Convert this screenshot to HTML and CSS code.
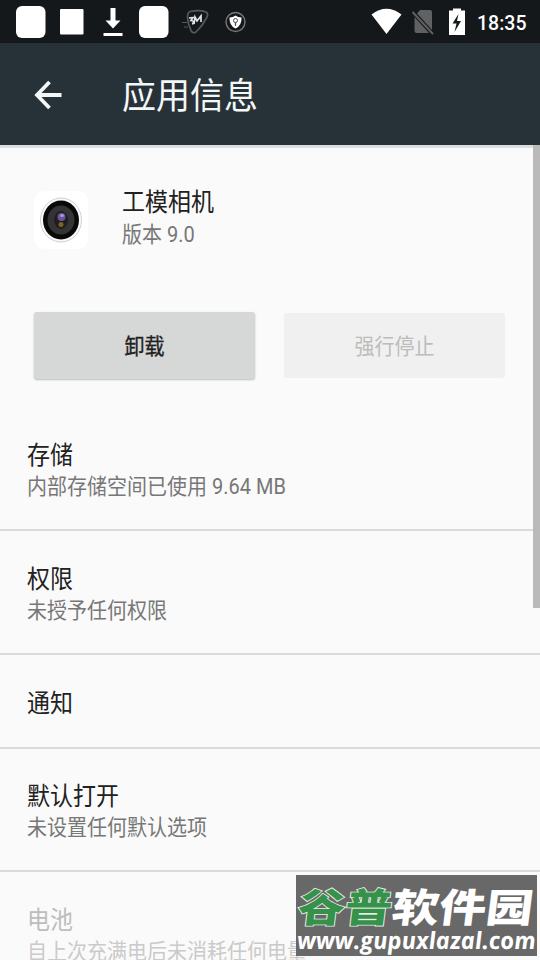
FILE: index.html
```html
<!DOCTYPE html>
<html lang="zh-CN">
<head>
<meta charset="utf-8">
<title>应用信息</title>
<link rel="stylesheet" href="styles.css">
</head>
<body>
<div class="screen">
  <header class="status">
    <svg class="status-icons" width="270" height="43" viewBox="0 0 270 43">
      <rect x="16" y="6" width="29.500" height="32" rx="6" fill="#fff"/>
      <rect x="60" y="9" width="23.500" height="25.500" rx="1" fill="#fff"/>
      <path d="M110.500 8h5v12.500h5L113 28.500l-7.500-8h5zM103.500 33h19v3h-19z" fill="#fff"/>
      <rect x="139" y="6" width="29.500" height="32" rx="6" fill="#fff"/>
      <path d="M190 11.500q10-2 16 .500 3 2 .500 6-4 8-10.500 14-3 2-5-1.500-3-6-3.500-13 0-5 2.500-6z" fill="none" stroke="#56595b" stroke-width="1.700"/>
      <path d="M182 22.500h5M184 27h4" stroke="#55585a"/>
      <path d="M189 18l4-.500-2 3q4 0 1.500 4M194 24l1-7 2 4 4-5v6" fill="none" stroke="#e4e4e4" stroke-width="1.700"/>
      <circle cx="235.500" cy="22" r="9.500" fill="none" stroke="#77797a" stroke-width="1.400"/>
      <path d="M235.500 15.500q2.500 2 6 2 .500 8-6 11-6.500-3-6-11 3.500 0 6-2z" fill="#fff"/>
      <circle cx="235.500" cy="20.500" r="2" fill="none" stroke="#4b4d4f"/>
      <path d="M235.500 22v4" stroke="#4b4d4f" stroke-width="1.200"/>
    </svg>
    <svg class="status-icons" width="200" height="43" viewBox="270 0 200 43">
      <path d="M371.500 14.500q15-11.500 30 0L386.500 34z" fill="#fff"/>
      <path d="M420 10h10q2 0 2 2v18L417 13.500zM414.500 17L429 33h-12q-2.500 0-2.500-2.500z" fill="#5f6163"/>
      <path d="M412.500 12L433 34" stroke="#5f6163" stroke-width="2"/>
      <path d="M449 10.500h4V8.500h8v2h4V35h-16z" fill="#fff"/>
      <path d="M458.500 14l-6 9.500h4l-2 8.500 6.500-11h-4z" fill="#15191c"/>
    </svg>
    <span class="clock">18:35</span>
  </header>
  <div class="appbar">
    <svg class="back" width="28" height="30" viewBox="0 0 28 30"><path d="M27.500 15H3M15.500 2L3 15l12.500 13" fill="none" stroke="#f4f7f8" stroke-width="3.800"/></svg>
    <h1 class="heading">应用信息</h1>
  </div>
  <main class="content">
    <section class="app">
      <svg class="app-icon" width="56" height="60" viewBox="0 0 56 60">
        <rect x="1" y="1" width="54" height="58" rx="11" fill="#fff"/>
        <ellipse cx="28" cy="30" rx="20.500" ry="22" fill="#fafafa" stroke="#d2d2d2"/>
        <ellipse cx="28" cy="30" rx="18" ry="19.500" fill="#090909"/>
        <ellipse cx="28" cy="30" rx="13.500" ry="14.500" fill="#343434"/>
        <ellipse cx="28" cy="30" rx="7" ry="9" fill="#201d24"/>
        <ellipse cx="28.500" cy="27" rx="4" ry="4" fill="#6a559b"/>
        <ellipse cx="29" cy="25.500" rx="2" ry="1.500" fill="#a79bd0"/>
        <ellipse cx="28" cy="34.500" rx="2.500" ry="2.500" fill="#806420"/>
      </svg>
      <div class="app-text">
        <div class="title">工模相机</div>
        <div class="sub">版本 9.0</div>
      </div>
    </section>
    <section class="actions">
      <div class="button"><span class="button-label">卸载</span></div>
      <div class="button disabled"><span class="button-label">强行停止</span></div>
    </section>
    <section class="row first"><div class="title">存储</div><div class="sub">内部存储空间已使用 9.64 MB</div></section>
    <section class="row"><div class="title">权限</div><div class="sub">未授予任何权限</div></section>
    <section class="row single"><div class="title">通知</div></section>
    <section class="row defaults"><div class="title">默认打开</div><div class="sub">未设置任何默认选项</div></section>
    <section class="row muted"><div class="title">电池</div><div class="sub">自上次充满电后未消耗任何电量</div></section>
  </main>
  <div class="scrollbar"></div>
  <div class="badge">
    <div class="badge-name"><span class="green">谷普</span><span class="white">软件园</span></div>
    <div class="badge-url">www.gupuxlazal.com</div>
  </div>
</div>
</body>
</html>
```

FILE: styles.css
```css
* { box-sizing: border-box; }
body { margin: 0; }
.screen {
  position: relative;
  width: 540px;
  height: 960px;
  overflow: hidden;
  background: #fafafa;
  font-family: Roboto, "Noto Sans CJK SC", sans-serif;
  white-space: nowrap;
}
.status {
  display: flex;
  align-items: center;
  height: 43px;
  background: #14181b;
}
.status-icons { flex: none; }
.clock {
  padding: 2px 0 0 7px;
  color: #fff;
  font-size: 19.5px;
  font-weight: 500;
  line-height: 24px;
  transform: scaleY(1.08);
}
.appbar {
  display: flex;
  align-items: center;
  height: 102px;
  padding-left: 34px;
  background: #273238;
}
.back { margin-top: 1px; }
.heading {
  margin: 4px 0 0 60px;
  color: #f4f7f8;
  font-size: 34px;
  font-weight: 400;
  line-height: 44px;
  transform: scaleY(1.08);
}
.content { height: 815px; border-top: 3px solid #dddee0; }
.app { display: flex; height: 164px; padding: 42px 0 0 33px; }
.app-text { margin-left: 33px; }
.app-text .title { margin-top: -3px; }
.app-text .sub { margin-top: -1px; }
.title, .sub { height: 32px; line-height: 32px; transform: scaleY(1.08); }
.title { color: #212121; font-size: 23px; }
.sub { color: #777; font-size: 20px; }
.actions { display: flex; gap: 29px; height: 100px; padding-left: 34px; }
.button {
  display: flex;
  align-items: center;
  justify-content: center;
  width: 221px;
  height: 67px;
  padding-bottom: 2px;
  border-radius: 3px;
  background: #d6d7d7;
  box-shadow: 0 1px 2px rgba(0, 0, 0, .25);
  color: #212121;
  font-size: 20px;
}
.button-label { transform: scaleY(1.08); -webkit-text-stroke: .3px; }
.disabled {
  height: 65px;
  margin-top: 1px;
  background: #f0f0f0;
  box-shadow: none;
  color: #bcbcbc;
}
.disabled .button-label { -webkit-text-stroke: 0; }
.row {
  height: 124px;
  padding: 33px 0 0 27px;
  border-top: 2px solid #dadada;
}
.row .sub { margin-top: -2px; }
.first { height: 117px; padding-top: 28px; border-top: 0; }
.single { height: 94px; }
.defaults { height: 123px; padding-top: 32px; }
.muted .title { color: #bdbdbd; }
.muted .sub { color: #cacaca; }
.scrollbar {
  position: absolute;
  top: 145px;
  right: 0;
  width: 7px;
  height: 463px;
  background: #bababa;
}
.badge {
  position: absolute;
  left: 296px;
  top: 875px;
  width: 241px;
  height: 81px;
  background: #686868;
}
.badge-name {
  display: flex;
  height: 53px;
  padding-left: 3px;
  font-family: "Noto Sans CJK SC", sans-serif;
  font-size: 47px;
  font-weight: 900;
  line-height: 62px;
  transform: scaleY(.84) skewX(-6deg);
}
.green {
  color: #36924a;
  -webkit-text-stroke: 2px #e8f0e8;
  paint-order: stroke fill;
}
.white { color: #fff; }
.badge-url {
  margin-top: -1px;
  padding-left: 1px;
  color: #fff;
  font-family: "Open Sans", sans-serif;
  font-size: 23.8px;
  font-style: italic;
  font-weight: 700;
  line-height: 26px;
  transform: skewX(5deg);
}
```
